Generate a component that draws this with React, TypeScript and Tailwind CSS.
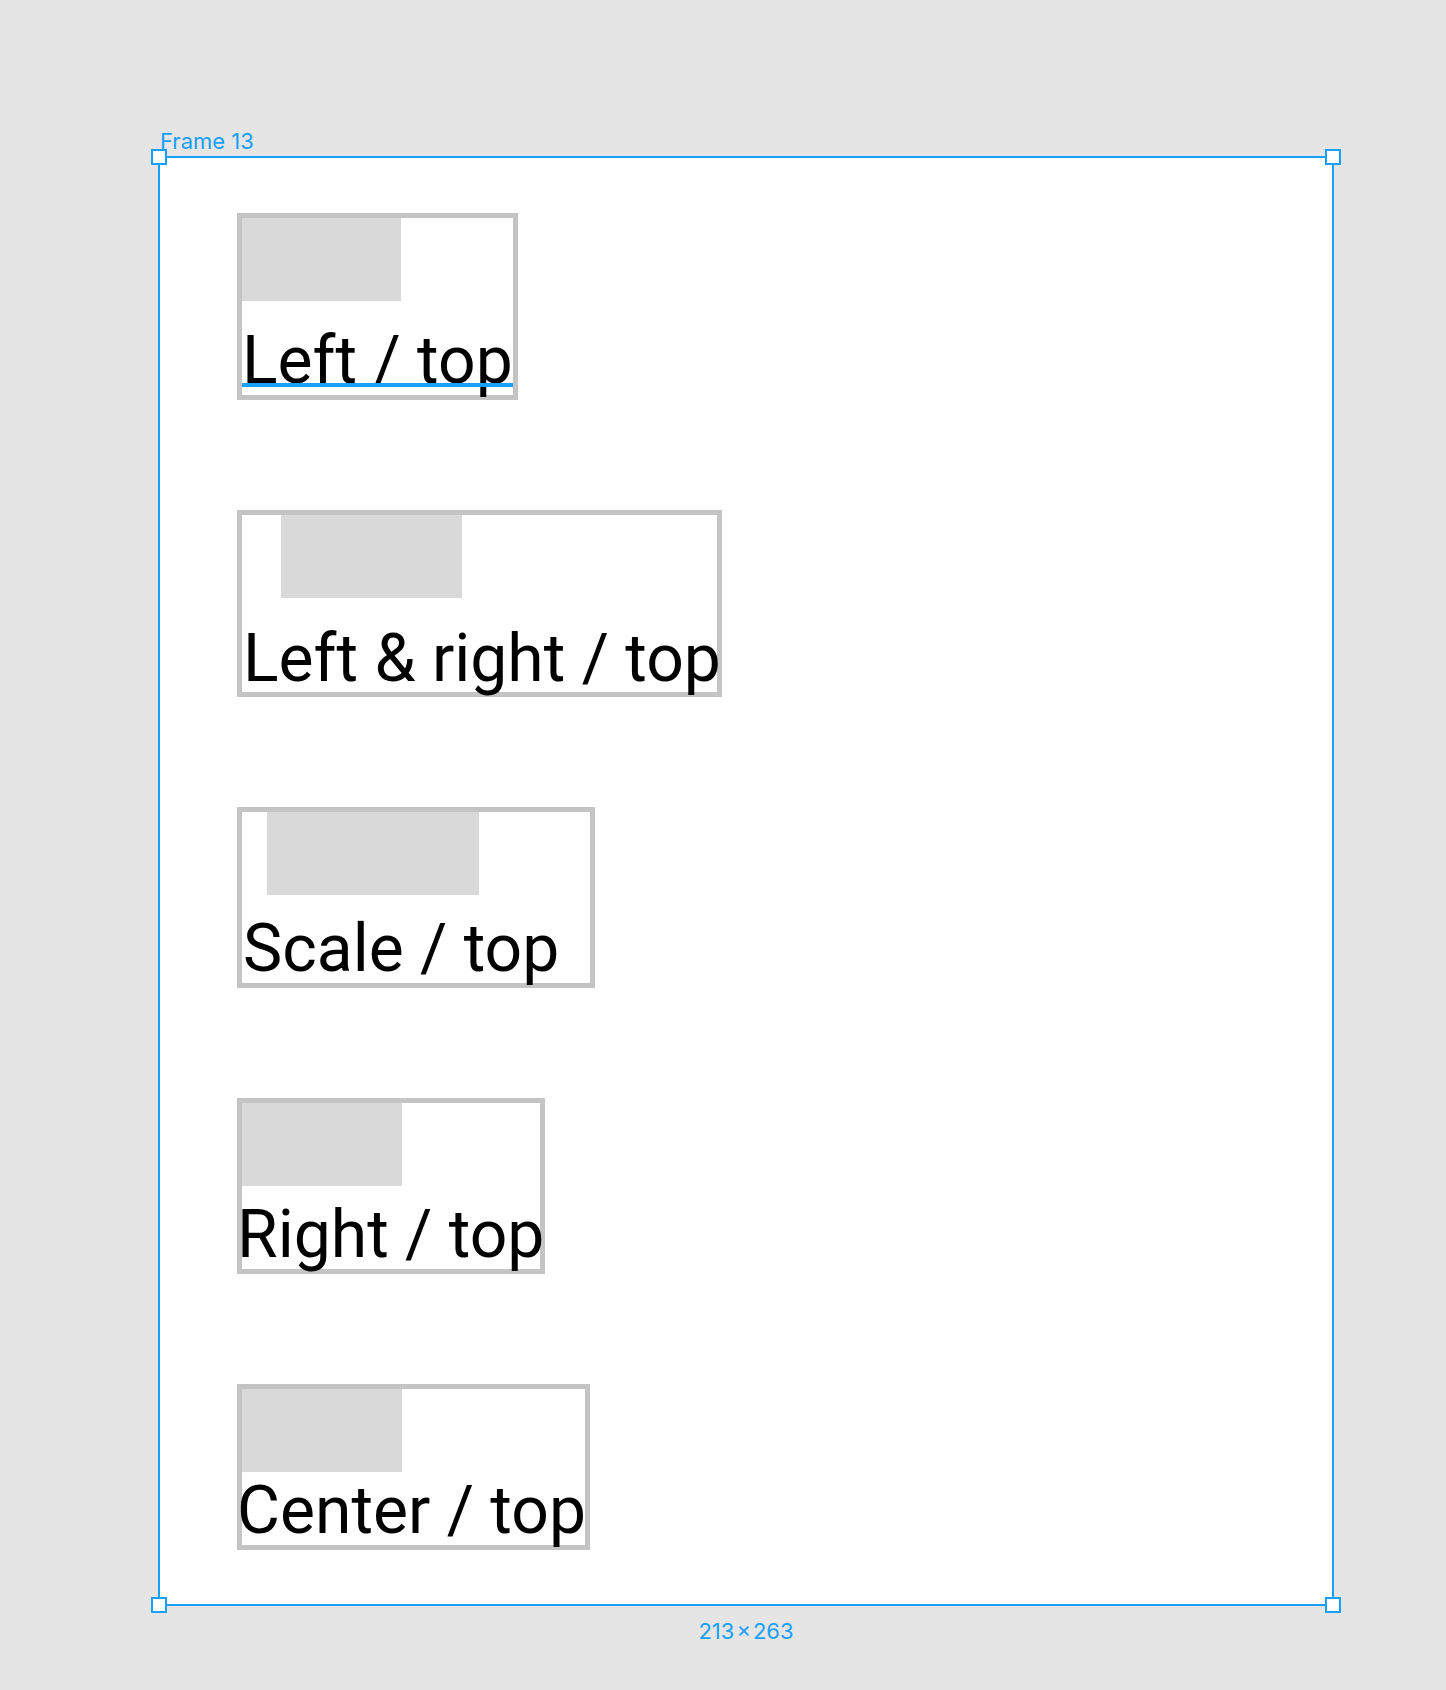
import React from 'react';

interface Sample {
  label: string;
  box: string;
  rect: string;
  text: string;
  underline?: boolean;
}

// each sample: outer box size, placeholder rect, text offset
const samples: Sample[] = [
  { label: 'Left / top', box: 'w-[281px] h-[187px]', rect: 'ml-0 w-[159px]', text: 'mt-[27px] ml-0', underline: true },
  { label: 'Left & right / top', box: 'w-[485px] h-[187px]', rect: 'ml-[39px] w-[181px]', text: 'mt-[28px] ml-[1px]' },
  { label: 'Scale / top', box: 'w-[358px] h-[181px]', rect: 'ml-[25px] w-[212px]', text: 'mt-[21px] ml-[1px]' },
  { label: 'Right / top', box: 'w-[308px] h-[176px]', rect: 'ml-0 w-[160px]', text: 'mt-[16px] ml-[-5px]' },
  { label: 'Center / top', box: 'w-[353px] h-[166px]', rect: 'ml-0 w-[160px]', text: 'mt-[6px] ml-[-5px]' },
];

const Handle: React.FC<{ pos: string }> = ({ pos }) => (
  <div className={`absolute w-[16px] h-[16px] bg-white border-[2.5px] border-[#18a0fb] ${pos}`} />
);

export default function App() {
  return (
    <div className="min-h-[1690px] w-full bg-[#e5e5e5] pt-[156px] pl-[158px] font-['Inter',sans-serif]">
      <div className="relative w-[1176px] h-[1450px] bg-white border-2 border-[#18a0fb]">
        <div className="absolute left-0 top-[-28px] text-[22px] leading-[22px] text-[#18a0fb] whitespace-nowrap">
          Frame 13
        </div>

        <div className="flex flex-col gap-[110px] pt-[55px] pl-[77px]">
          {samples.map(s => (
            <div key={s.label} className={`flex flex-col border-[5px] border-[#c4c4c4] ${s.box}`}>
              <div className={`h-[83px] shrink-0 bg-[#d9d9d9] ${s.rect}`} />
              <div
                className={`relative whitespace-nowrap font-['Roboto',sans-serif] text-[66px] leading-[66px] text-black ${s.text}`}
              >
                {s.label}
                {s.underline && (
                  <div className="absolute left-0 right-0 top-[55px] h-[4px] bg-[#18a0fb]" />
                )}
              </div>
            </div>
          ))}
        </div>

        <div className="absolute left-0 right-0 top-[calc(100%+16px)] text-center text-[22px] leading-[22px] text-[#18a0fb] whitespace-nowrap">
          213{'\u200a'}×{'\u200a'}263
        </div>

        <Handle pos="left-[-9px] top-[-9px]" />
        <Handle pos="right-[-9px] top-[-9px]" />
        <Handle pos="left-[-9px] bottom-[-9px]" />
        <Handle pos="right-[-9px] bottom-[-9px]" />
      </div>
    </div>
  );
}
